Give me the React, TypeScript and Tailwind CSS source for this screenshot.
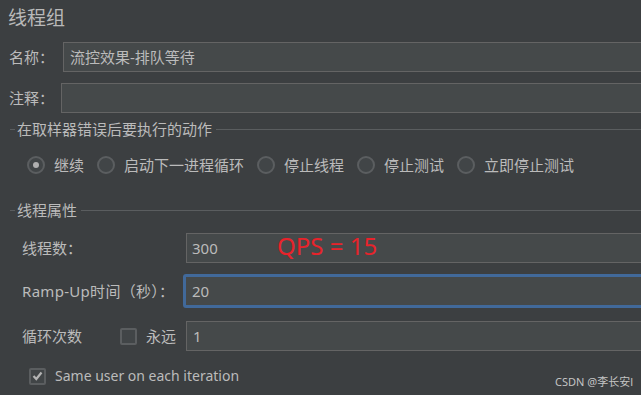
import React from 'react';

const font = "font-['Noto_Sans','Noto_Sans_CJK_SC',sans-serif]";

function Radio({ checked, label }: { checked?: boolean; label: string }) {
    return (
        <div className="flex items-center gap-[9px]">
            <span className="flex h-[18px] w-[18px] items-center justify-center rounded-full border-2 border-[#5b5e60] bg-[#414547]">
                {checked && <span className="h-[6px] w-[6px] rounded-full bg-[#b0b0b0]" />}
            </span>
            <span className="text-[15px] leading-[20px]">{label}</span>
        </div>
    );
}

function Checkbox({ checked }: { checked?: boolean }) {
    return (
        <span className="flex h-[17px] w-[17px] items-center justify-center rounded-[2px] border-2 border-[#5b5e60] bg-[#414547]">
            {checked && (
                <svg width="11" height="10" viewBox="0 0 11 10">
                    <polyline points="1.5,5 4.3,8 9.5,1.5" fill="none" stroke="#b4b4b4" strokeWidth="2.2" />
                </svg>
            )}
        </span>
    );
}

function Section({ title }: { title: string }) {
    return (
        <div className="flex h-[20px] items-center">
            <span className="ml-[10px] h-px w-[5px] bg-[#5a5d5f]" />
            <span className="ml-[2px] mr-[4px] text-[15px] leading-[20px]">{title}</span>
            <span className="h-px flex-1 bg-[#5a5d5f]" />
        </div>
    );
}

export default function App() {
    return (
        <div className={`relative h-[395px] w-[641px] overflow-hidden bg-[#3c3f41] text-[#bbbbbb] ${font}`}>
            <h1 className="h-[42px] pl-[8px] pt-[5px] text-[19px] leading-[26px] text-[#b9b9b9]">线程组</h1>

            <div className="flex h-[30px] items-center">
                <label className="w-[63px] pl-[9px] text-[15px]">名称：</label>
                <div className="-mr-4 flex h-full flex-1 items-center border border-[#646464] bg-[#45494a] pl-[6px] text-[15px]">
                    流控效果-排队等待
                </div>
            </div>

            <div className="mt-[11px] flex h-[30px] items-center">
                <label className="w-[61px] pl-[9px] text-[15px]">注释：</label>
                <div className="-mr-4 h-full flex-1 border border-[#646464] bg-[#45494a]" />
            </div>

            <div className="mt-[6px]">
                <Section title="在取样器错误后要执行的动作" />
            </div>

            <div className="mt-[16px] flex h-[20px] items-center gap-[13px] pl-[27px]">
                <Radio checked label="继续" />
                <Radio label="启动下一进程循环" />
                <Radio label="停止线程" />
                <Radio label="停止测试" />
                <Radio label="立即停止测试" />
            </div>

            <div className="mt-[25px]">
                <Section title="线程属性" />
            </div>

            <div className="mt-[13px] flex h-[30px] items-center">
                <label className="w-[186px] pl-[22px] text-[15px]">线程数：</label>
                <div className="relative -mr-4 flex h-full flex-1 items-center border border-[#646464] bg-[#45494a] pl-[5px] text-[15px]">
                    300
                    <span className="absolute left-[90px] top-[-3px] text-[24px] leading-[30px] text-[#e8232b]">QPS = 15</span>
                </div>
            </div>

            <div className="mt-[11px] flex h-[34px] items-center">
                <label className="w-[183px] pl-[22px] text-[15px] tracking-[0.3px]">Ramp-Up时间（秒）：</label>
                <div className="-mr-4 flex h-full flex-1 items-center rounded-[3px] border-[3px] border-[#41699a] bg-[#45494a] pl-[6px] text-[15px]">
                    20
                </div>
            </div>

            <div className="mt-[13px] flex h-[30px] items-center">
                <label className="w-[120px] pl-[22px] text-[15px]">循环次数</label>
                <Checkbox />
                <span className="ml-[9px] w-[40px] text-[15px]">永远</span>
                <div className="-mr-4 flex h-full flex-1 items-center border border-[#646464] bg-[#45494a] pl-[6px] text-[15px]">
                    1
                </div>
            </div>

            <div className="mt-[15px] flex h-[20px] items-center pl-[29px]">
                <Checkbox checked />
                <span className="ml-[9px] text-[14px] leading-[20px]">Same user on each iteration</span>
            </div>

            <div className="absolute bottom-[5px] right-[8px] text-[11px] text-[#c4c4c4]">CSDN @李长安l</div>
        </div>
    );
}
